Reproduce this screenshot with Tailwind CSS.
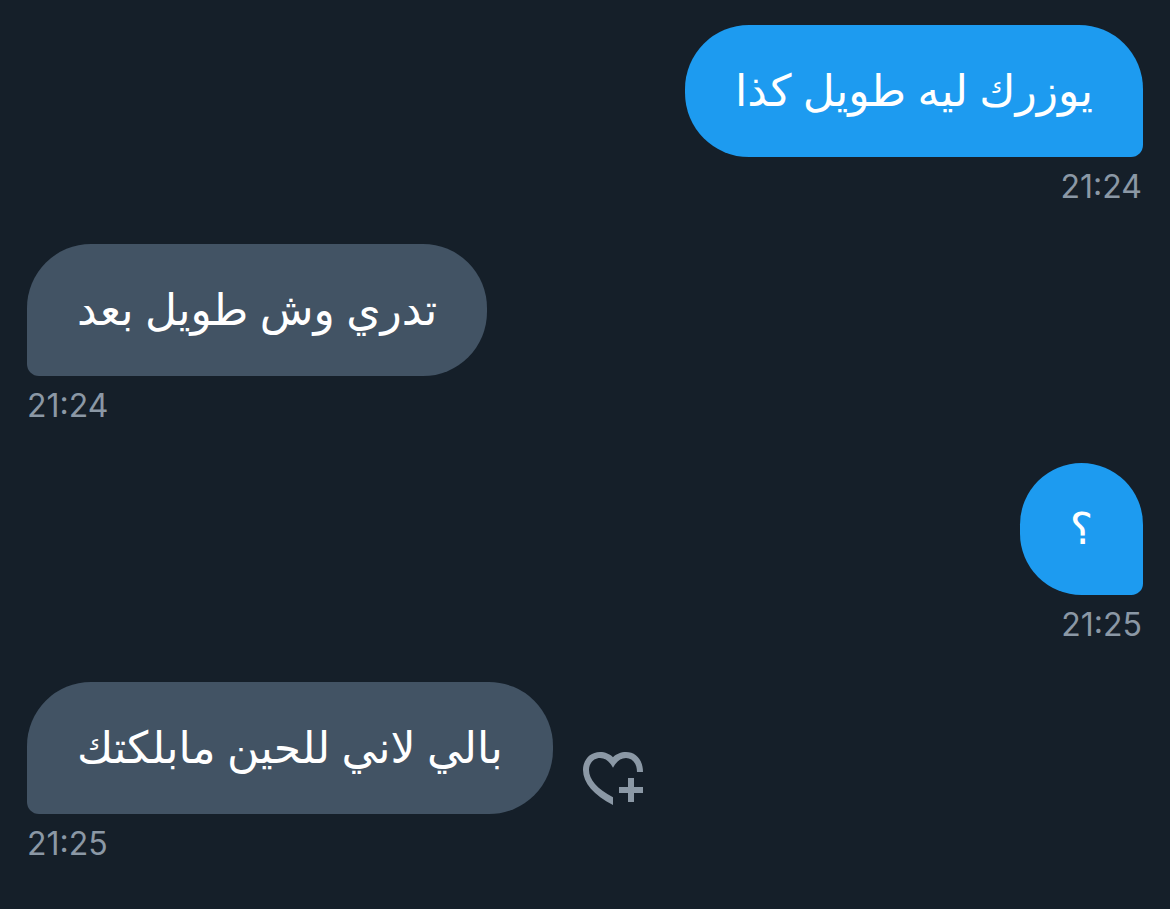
<!DOCTYPE html>
<html lang="ar">
<head>
<meta charset="utf-8">
<meta name="viewport" content="width=device-width, initial-scale=1">
<title>Messages</title>
<script src="https://cdn.jsdelivr.net/npm/@tailwindcss/browser@4"></script>
</head>
<body class="min-h-screen bg-[#151f29] font-['Noto_Sans','DejaVu_Sans',sans-serif]">
<main class="flex flex-col gap-9 px-[27px] py-[25px]">
  <article class="flex flex-col items-end">
    <p dir="rtl" class="flex min-h-33 items-center rounded-[64px] rounded-br-xl bg-[#1d9bf0] px-[50px] pb-1 text-[44px] text-white">يوزرك ليه طويل كذا</p>
    <time class="mt-2 px-px font-['Inter',sans-serif] text-[32px] leading-[43px] text-[#8b98a5]">21:24</time>
  </article>
  <article class="flex flex-col items-start">
    <p dir="rtl" class="flex min-h-33 items-center rounded-[64px] rounded-bl-xl bg-[#425364] px-[50px] pb-1 text-[44px] text-white">تدري وش طويل بعد</p>
    <time class="mt-2 font-['Inter',sans-serif] text-[32px] leading-[43px] text-[#8b98a5]">21:24</time>
  </article>
  <article class="flex flex-col items-end">
    <p dir="rtl" class="flex min-h-33 items-center rounded-[64px] rounded-br-xl bg-[#1d9bf0] px-[50px] pb-1 text-[44px] text-white">؟</p>
    <time class="mt-2 px-px font-['Inter',sans-serif] text-[32px] leading-[43px] text-[#8b98a5]">21:25</time>
  </article>
  <article class="flex flex-col items-start">
    <div class="flex items-end gap-[30px]">
      <p dir="rtl" class="flex min-h-33 items-center rounded-[64px] rounded-bl-xl bg-[#425364] px-[50px] pb-1 text-[44px] text-white">بالي لاني للحين مابلكتك</p>
      <button type="button" aria-label="React" class="shrink-0 pb-[9px] text-[#8b98a5]">
        <svg class="block" width="60" height="53" viewBox="0 0 60 53" fill="currentColor" aria-hidden="true"><path d="M30 5.3C33 2 38 0 43 0C53 0 60 8 60 20H54C54 11 49 6 43 6C37.500 6 33.500 9.500 30 15.700C26.500 9.500 22.500 6 17 6C11 6 6 11 6 18C6 27 14 37 30 45.300V53C11 43 0 31 0 18C0 8 7 0 17 0C22 0 27 2 30 5.300Z"/><path d="M45 26H51V35H60V41H51V50H45V41H36V35H45Z"/></svg>
      </button>
    </div>
    <time class="mt-2 font-['Inter',sans-serif] text-[32px] leading-[43px] text-[#8b98a5]">21:25</time>
  </article>
</main>
</body>
</html>
